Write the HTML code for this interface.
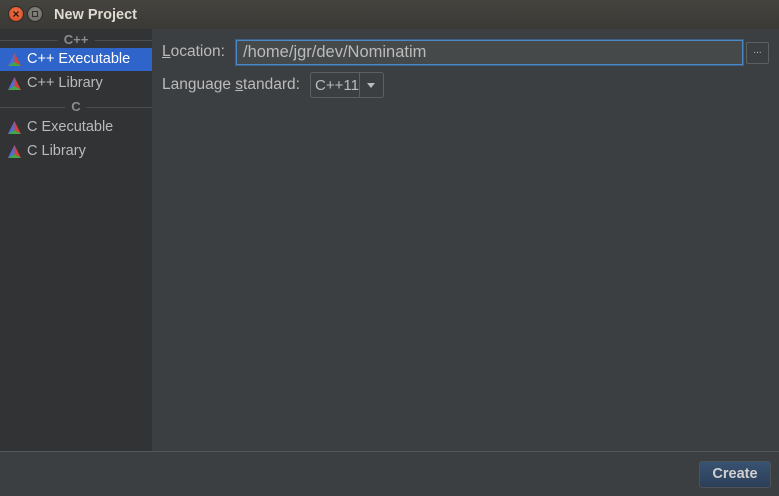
<!DOCTYPE html>
<html><head><style>
*{margin:0;padding:0;box-sizing:border-box}
body{width:779px;height:496px;background:#3c3f41;font-family:"Liberation Sans","DejaVu Sans",sans-serif;font-size:14.5px;color:#bbbbbb;position:relative;overflow:hidden}
.title{position:absolute;left:0;top:0;width:779px;height:29px;background:linear-gradient(#45443f,#3a3935);color:#dfdbd2;font-weight:bold;font-size:14.5px}
.title span{position:absolute;left:54px;top:7px}
.b{position:absolute;top:6px;width:16px;height:16px;border-radius:50%}
.side{position:absolute;left:0;top:29px;width:152px;height:422px;background:#313335}
.hdr{position:absolute;left:0;width:152px;height:1px;background:#4b4d4f}
.hdr span{position:absolute;left:50%;transform:translateX(-50%);top:-8px;background:#313335;padding:0 6px;color:#8c8c8c;font-weight:bold;font-size:13px}
.item{position:absolute;left:0;width:152px;height:23px;line-height:23px;padding-left:27px;color:#bbbbbb}
.item.sel{background:#2f65ca;color:#fff}
.item svg{position:absolute;left:8px;top:5px}
.lbl{position:absolute;color:#bbbbbb;font-size:15.5px}
.foot{position:absolute;left:0;top:451px;width:779px;height:1px;background:#555759}
</style></head><body>
<div class="title">
<div class="b" style="left:8px;background:radial-gradient(circle at 50% 40%,#f0774c,#d0441c);border:1px solid #2b2a27"><svg width="14" height="14" viewBox="0 0 14 14"><path d="M4.5 4.5l5 5M9.5 4.5l-5 5" stroke="#3a1a10" stroke-width="1.5"/></svg></div>
<div class="b" style="left:27px;background:radial-gradient(circle at 50% 40%,#8a8985,#67665f);border:1px solid #2b2a27"><svg width="14" height="14" viewBox="0 0 14 14"><rect x="4.5" y="4.5" width="5" height="5" fill="none" stroke="#33322e" stroke-width="1.2"/></svg></div>
<span>New Project</span></div>
<div class="side">
<div class="hdr" style="top:11px"><span>C++</span></div>
<div class="item sel" style="top:19px"><svg width="13" height="13" viewBox="0 0 13 13"><path d="M6.5 0L0 13h13z" fill="#d6403a"/><path d="M6.5 0L0 13l6.5-4z" fill="#4a6fd6"/><path d="M0 13h13L6.5 9z" fill="#3fa64a"/></svg>C++ Executable</div>
<div class="item" style="top:43px"><svg width="13" height="13" viewBox="0 0 13 13"><path d="M6.5 0L0 13h13z" fill="#d6403a"/><path d="M6.5 0L0 13l6.5-4z" fill="#4a6fd6"/><path d="M0 13h13L6.5 9z" fill="#3fa64a"/></svg>C++ Library</div>
<div class="hdr" style="top:78px"><span>C</span></div>
<div class="item" style="top:87px"><svg width="13" height="13" viewBox="0 0 13 13"><path d="M6.5 0L0 13h13z" fill="#d6403a"/><path d="M6.5 0L0 13l6.5-4z" fill="#4a6fd6"/><path d="M0 13h13L6.5 9z" fill="#3fa64a"/></svg>C Executable</div>
<div class="item" style="top:111px"><svg width="13" height="13" viewBox="0 0 13 13"><path d="M6.5 0L0 13h13z" fill="#d6403a"/><path d="M6.5 0L0 13l6.5-4z" fill="#4a6fd6"/><path d="M0 13h13L6.5 9z" fill="#3fa64a"/></svg>C Library</div>
</div>
<div class="lbl" style="left:162px;top:43px"><u>L</u>ocation:</div>
<div style="position:absolute;left:236px;top:40px;width:507px;height:25px;background:#45494a;border:1px solid #4a88c7;box-shadow:0 0 0 1px #3d6185;color:#bbbbbb;padding:2px 6px;font-size:16.5px">/home/jgr/dev/Nominatim</div>
<div style="position:absolute;left:746px;top:42px;width:23px;height:22px;border:1px solid #5e6060;border-radius:2px;color:#bbb;text-align:center;font-size:10px;line-height:16px">...</div>
<div class="lbl" style="left:162px;top:76px">Language <u>s</u>tandard:</div>
<div style="position:absolute;left:310px;top:72px;width:74px;height:26px;border:1px solid #5e6060;border-radius:3px;background:#3c3f41">
<span style="position:absolute;left:4px;top:4px;color:#bbb;font-size:15px">C++11</span>
<div style="position:absolute;left:48px;top:0;width:1px;height:24px;background:#5e6060"></div>
<svg style="position:absolute;left:56px;top:10px" width="8" height="5"><path d="M0 0h8L4 5z" fill="#bbb"/></svg></div>
<div class="foot"></div>
<div style="position:absolute;left:699px;top:461px;width:72px;height:27px;border:1px solid #4d5257;border-radius:3px;background:linear-gradient(#385272,#2c3f58);color:#d0d0d0;font-weight:bold;text-align:center;line-height:25px">Create</div>
</body></html>
